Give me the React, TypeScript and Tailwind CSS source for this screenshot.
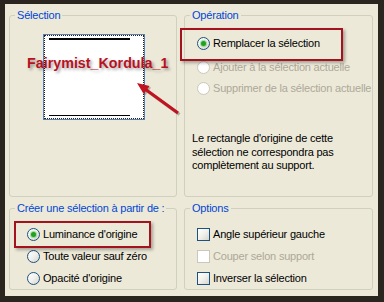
import React from "react";

const font = { fontFamily: '"Liberation Sans", Arial, sans-serif' };

function Radio({ checked, disabled }: { checked?: boolean; disabled?: boolean }) {
  return (
    <span
      className={
        "flex h-[13px] w-[13px] shrink-0 items-center justify-center rounded-full border " +
        (disabled
          ? "border-[#cac8bb] bg-white"
          : "border-[#1c5180] bg-gradient-to-br from-[#ffffff] via-[#f1f1ee] to-[#d6d5cc]")
      }
    >
      {checked && (
        <span className="h-[5px] w-[5px] rounded-full bg-[#21a121] shadow-[0_0_1px_1px_rgba(90,200,90,0.6)]" />
      )}
    </span>
  );
}

function Check({ disabled }: { disabled?: boolean }) {
  return (
    <span
      className={
        "h-[13px] w-[13px] shrink-0 border " +
        (disabled
          ? "border-[#cac8bb] bg-white"
          : "border-[#1c5180] bg-gradient-to-br from-[#ffffff] via-[#f0f0ec] to-[#d6d5cc]")
      }
    />
  );
}

function Row({
  control,
  label,
  disabled,
  className = "",
}: {
  control: React.ReactNode;
  label: string;
  disabled?: boolean;
  className?: string;
}) {
  return (
    <div className={"flex h-[13px] items-center gap-[3px] " + className}>
      {control}
      <span className={"whitespace-nowrap " + (disabled ? "text-[#aca899]" : "text-black")}>{label}</span>
    </div>
  );
}

function Group({ title, children }: { title: string; children: React.ReactNode }) {
  return (
    <fieldset className="min-w-0 rounded-[3px] border border-[#d0d0bf]">
      <legend className="ml-[5px] px-[2px] leading-[13px] text-[#0046d5]">{title}</legend>
      {children}
    </fieldset>
  );
}

export default function App() {
  return (
    <div
      className="relative h-[302px] w-[384px] bg-[#2b2520] pb-[6px] pl-[5px] pr-[6px] pt-[4px] text-[11px] tracking-[-0.2px]"
      style={font}
    >
      <div className="grid h-full grid-cols-[168px_189px] grid-rows-[188px_88px] gap-x-[7px] gap-y-[5px] bg-[#ece9d8] pb-[6px] pl-[4px] pr-[5px] pt-[5px]">
        <Group title="Sélection">
          <div className="ml-[33px] mt-[12px] h-[86px] w-[102px] border border-[#5b7fb0] bg-white">
            <div className="flex h-full flex-col justify-between border border-dotted border-[#222] px-[4px] py-[2px]">
              <div className="h-[2px] w-[81px] bg-black" />
              <div className="h-[1.5px] w-[81px] bg-black" />
            </div>
          </div>
        </Group>

        <Group title="Opération">
          <div className="pl-[12px]">
            <Row className="mt-[15px]" control={<Radio checked />} label="Remplacer la sélection" />
            <Row className="mt-[11px]" control={<Radio disabled />} label="Ajouter à la sélection actuelle" disabled />
            <Row className="mt-[8px]" control={<Radio disabled />} label="Supprimer de la sélection actuelle" disabled />
          </div>
          <p className="mt-[37px] pl-[7px] leading-[13.5px] text-black">
            Le rectangle d'origine de cette
            <br />
            sélection ne correspondra pas
            <br />
            complètement au support.
          </p>
        </Group>

        <Group title="Créer une sélection à partir de :">
          <div className="pl-[17px]">
            <Row className="mt-[13px]" control={<Radio checked />} label="Luminance d'origine" />
            <Row className="mt-[9px]" control={<Radio />} label="Toute valeur sauf zéro" />
            <Row className="mt-[9px]" control={<Radio />} label="Opacité d'origine" />
          </div>
        </Group>

        <Group title="Options">
          <div className="pl-[12px]">
            <Row className="mt-[13px]" control={<Check />} label="Angle supérieur gauche" />
            <Row className="mt-[9px]" control={<Check disabled />} label="Couper selon support" disabled />
            <Row className="mt-[9px]" control={<Check />} label="Inverser la sélection" />
          </div>
        </Group>
      </div>

      {/* annotations drawn over the dialog */}
      <div
        className="absolute left-[27px] top-[55px] whitespace-nowrap text-[14.3px] font-bold leading-[16px] tracking-normal text-[#b8111f] [text-shadow:2px_2px_3px_rgba(0,0,0,0.35)]"
        style={font}
      >
        Fairymist_Kordula_1
      </div>
      <svg className="absolute left-[130px] top-[76px]" width="56" height="44" viewBox="0 0 56 44">
        <g transform="translate(1.5 1.5)" opacity="0.25">
          <line x1="48" y1="37" x2="15" y2="13" stroke="#000" strokeWidth="3" />
          <polygon points="7,7 19.6,10.1 13.7,18.1" fill="#000" />
        </g>
        <line x1="48" y1="37" x2="15" y2="13" stroke="#c0121f" strokeWidth="3" />
        <polygon points="7,7 19.6,10.1 13.7,18.1" fill="#c0121f" />
      </svg>
      <div className="absolute left-[180px] top-[28px] h-[33px] w-[163px] border-2 border-[#a3131d] shadow-[2px_2px_3px_rgba(0,0,0,0.3)]" />
      <div className="absolute left-[14px] top-[221px] h-[27px] w-[137px] border-2 border-[#a3131d] shadow-[2px_2px_3px_rgba(0,0,0,0.3)]" />
    </div>
  );
}
